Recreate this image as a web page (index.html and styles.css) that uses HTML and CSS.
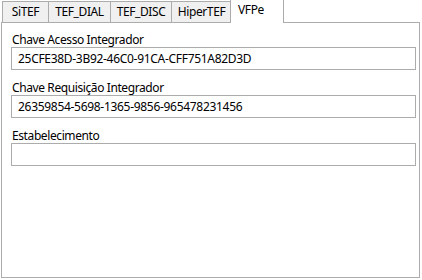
FILE: index.html
```html
<!DOCTYPE html>
<html lang="pt-BR">
<head>
    <meta charset="UTF-8">
    <title>Configuração TEF</title>
    <link rel="stylesheet" href="styles.css">
</head>
<body>

<div class="tab-control">
    <div class="tab-strip">
        <div class="tab tab-sitef">SiTEF</div>
        <div class="tab tab-dial">TEF_DIAL</div>
        <div class="tab tab-disc">TEF_DISC</div>
        <div class="tab tab-hiper">HiperTEF</div>
        <div class="tab tab-vfpe active">VFPe</div>
    </div>
    <div class="tab-page">
        <div class="field">
            <label for="chaveAcesso">Chave Acesso Integrador</label>
            <input type="text" id="chaveAcesso" value="25CFE38D-3B92-46C0-91CA-CFF751A82D3D">
        </div>
        <div class="field">
            <label for="chaveRequisicao">Chave Requisição Integrador</label>
            <input type="text" id="chaveRequisicao" value="26359854-5698-1365-9856-965478231456">
        </div>
        <div class="field">
            <label for="estabelecimento">Estabelecimento</label>
            <input type="text" id="estabelecimento" value="">
        </div>
    </div>
</div>

</body>
</html>
```

FILE: styles.css
```css
body {
    margin: 0;
    background-color: #fff;
    font-family: "Noto Sans", "Open Sans", sans-serif;
    font-size: 12px;
    letter-spacing: -0.4px;
    color: #000;
    width: 422px;
    height: 280px;
    overflow: hidden;
}
.tab-control {
    padding-left: 1px;
}
.tab-strip {
    display: flex;
    align-items: flex-end;
    height: 22px;
    padding-left: 1px;
    position: relative;
    z-index: 1;
}
.tab {
    box-sizing: border-box;
    height: 21px;
    margin-right: -1px;
    border: 1px solid #acacac;
    border-bottom: none;
    background-color: #f0f0f0;
    line-height: 19px;
    text-align: center;
}
.tab-sitef { width: 47px; }
.tab-dial { width: 63px; }
.tab-disc { width: 62px; }
.tab-hiper { width: 61px; }
.tab.active {
    height: 24px;
    width: 54px;
    margin-left: -1px;
    margin-bottom: -1px;
    background-color: #fff;
    line-height: 20px;
    text-align: left;
    padding-left: 7px;
}
.tab-page {
    box-sizing: border-box;
    width: 419px;
    height: 256px;
    border: 1px solid #acacac;
    background-color: #fff;
    padding: 10px 3px 0 9px;
}
.field {
    margin-bottom: 11px;
}
.field label {
    display: block;
    height: 14px;
    line-height: 14px;
    padding-left: 1px;
}
.field input {
    display: block;
    box-sizing: border-box;
    width: 405px;
    height: 23px;
    margin: 0;
    border: 1px solid #acacac;
    padding: 0 0 1px 6px;
    font-family: inherit;
    font-size: 12px;
    letter-spacing: -0.3px;
    color: #000;
    background-color: #fff;
    outline: none;
}
```
